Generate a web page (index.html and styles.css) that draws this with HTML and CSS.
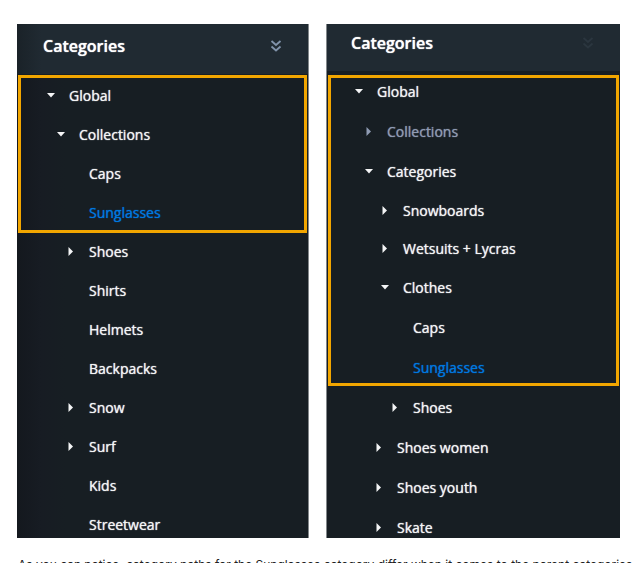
FILE: index.html
```html
<!DOCTYPE html>
<html lang="en">
<head>
<meta charset="utf-8">
<meta name="viewport" content="width=device-width, initial-scale=1">
<title>Categories</title>
<link rel="stylesheet" href="styles.css">
</head>
<body>
<svg class="defs" aria-hidden="true">
  <symbol id="down" viewBox="0 0 12 12"><path d="M2 3h8l-4 4.500z" fill="currentColor"/></symbol>
  <symbol id="right" viewBox="0 0 12 12"><path d="M3.500 1v9l4.500-4.500z" fill="currentColor"/></symbol>
  <symbol id="chevrons" viewBox="0 0 12 12"><path d="M1.500 1l4.500 4L10.500 1M1.500 6.500l4.500 4L10.500 6.500" fill="none" stroke="currentColor" stroke-width="1.800"/></symbol>
</svg>
<main class="panels">
  <section class="panel panel-left">
    <header class="head">
      <h2>Categories</h2>
      <button class="collapse" aria-label="Collapse all"><svg><use href="#chevrons"/></svg></button>
    </header>
    <ul class="tree highlight">
      <li class="row l1"><button class="toggle" aria-label="Toggle Global"><svg><use href="#down"/></svg></button><a href="#">Global</a></li>
      <li class="row l2"><button class="toggle" aria-label="Toggle Collections"><svg><use href="#down"/></svg></button><a href="#">Collections</a></li>
      <li class="row l3"><span class="toggle"></span><a href="#">Caps</a></li>
      <li class="row l3"><span class="toggle"></span><a class="active" href="#">Sunglasses</a></li>
    </ul>
    <ul class="tree">
      <li class="row l3"><button class="toggle" aria-label="Toggle Shoes"><svg><use href="#right"/></svg></button><a href="#">Shoes</a></li>
      <li class="row l3"><span class="toggle"></span><a href="#">Shirts</a></li>
      <li class="row l3"><span class="toggle"></span><a href="#">Helmets</a></li>
      <li class="row l3"><span class="toggle"></span><a href="#">Backpacks</a></li>
      <li class="row l3"><button class="toggle" aria-label="Toggle Snow"><svg><use href="#right"/></svg></button><a href="#">Snow</a></li>
      <li class="row l3"><button class="toggle" aria-label="Toggle Surf"><svg><use href="#right"/></svg></button><a href="#">Surf</a></li>
      <li class="row l3"><span class="toggle"></span><a href="#">Kids</a></li>
      <li class="row l3 cut"><span class="toggle"></span><a href="#">Streetwear</a></li>
    </ul>
  </section>
  <section class="panel panel-right">
    <header class="head">
      <h2>Categories</h2>
      <button class="collapse" aria-label="Collapse all"><svg><use href="#chevrons"/></svg></button>
    </header>
    <ul class="tree highlight">
      <li class="row l1"><button class="toggle" aria-label="Toggle Global"><svg><use href="#down"/></svg></button><a href="#">Global</a></li>
      <li class="row l2 muted"><button class="toggle" aria-label="Toggle Collections"><svg><use href="#right"/></svg></button><a href="#">Collections</a></li>
      <li class="row l2"><button class="toggle" aria-label="Toggle Categories"><svg><use href="#down"/></svg></button><a href="#">Categories</a></li>
      <li class="row l4 tight"><button class="toggle" aria-label="Toggle Snowboards"><svg><use href="#right"/></svg></button><a href="#">Snowboards</a></li>
      <li class="row l4 tight"><button class="toggle" aria-label="Toggle Wetsuits + Lycras"><svg><use href="#right"/></svg></button><a href="#">Wetsuits + Lycras</a></li>
      <li class="row l4"><button class="toggle" aria-label="Toggle Clothes"><svg><use href="#down"/></svg></button><a href="#">Clothes</a></li>
      <li class="row l5"><span class="toggle"></span><a href="#">Caps</a></li>
      <li class="row l5"><span class="toggle"></span><a class="active" href="#">Sunglasses</a></li>
    </ul>
    <ul class="tree">
      <li class="row l5"><button class="toggle" aria-label="Toggle Shoes"><svg><use href="#right"/></svg></button><a href="#">Shoes</a></li>
      <li class="row l3"><button class="toggle" aria-label="Toggle Shoes women"><svg><use href="#right"/></svg></button><a href="#">Shoes women</a></li>
      <li class="row l3"><button class="toggle" aria-label="Toggle Shoes youth"><svg><use href="#right"/></svg></button><a href="#">Shoes youth</a></li>
      <li class="row l3 cut"><button class="toggle" aria-label="Toggle Skate"><svg><use href="#right"/></svg></button><a href="#">Skate</a></li>
    </ul>
  </section>
</main>
<p class="note">As you can notice, category paths for the Sunglasses category differ when it comes to the parent categories.</p>
</body>
</html>
```
FILE: styles.css
```css
* { box-sizing: border-box; }

body {
  margin: 0;
  height: 100vh;
  overflow: hidden;
  background: #fff;
  font-family: "Open Sans", sans-serif;
}

.defs { display: none; }

.panels {
  display: grid;
  grid-template-columns: 292fr 294fr;
  gap: 17px;
  padding: 24px 18px 0 17px;
}

.panel {
  --row: 40px;
  background: #171e23;
  color: #f4f5f6;
  text-shadow: 0 0 1px currentColor;
}

.panel-left {
  --row: 39px;
  border-right: 1px solid #82878a;
  background: linear-gradient(90deg, #14181e, #171c23 24px, #171e23 48px);
}

.panel-right { border-left: 1px solid #82878a; }

.head {
  display: flex;
  align-items: center;
  justify-content: space-between;
  height: 48px;
  padding: 0 26px 10px 24px;
  background: #202a32;
  border-bottom: 1px solid #171e23;
}

.panel-left .head {
  height: 52px;
  padding: 0 26px 6px;
  background: linear-gradient(90deg, #1a2228, #202a32 24px);
  border-bottom: 2px solid #171e23;
}

h2 {
  margin: 0;
  font-size: 16px;
  line-height: 20px;
  font-weight: 600;
  color: #fff;
}

button {
  border: 0;
  padding: 0;
  background: none;
  color: inherit;
}

svg { display: block; width: 12px; height: 12px; }

.collapse { color: #8193ab; }
.panel-right .collapse { color: #2b363f; }

.tree {
  position: relative;
  margin: 0;
  padding: 0;
  list-style: none;
}

/* Frame drawn over the rows so that it takes no space in the list */
.highlight::after {
  content: "";
  position: absolute;
  inset: -1px 1px;
  border: 3px solid #f2a600;
  pointer-events: none;
}

.panel-right .highlight::after { inset: 3px 1px 2px; }

.row {
  display: flex;
  gap: 12px;
  height: var(--row);
  line-height: var(--row);
  font-size: 14px;
  font-weight: 500;
}

.row a {
  color: inherit;
  text-decoration: none;
  text-shadow: 0 0 1px currentColor;
}
.row a.active { color: #0078e0; }

.toggle {
  display: flex;
  align-items: center;
  width: 12px;
  height: var(--row);
}

.l1 { padding-left: 28px; }
.l2 { padding-left: 38px; }
.l3 { padding-left: 48px; }
.panel-right .l1 { padding-left: 26px; }
.panel-right .l2 { padding-left: 36px; }
.panel-right .l3 { padding-left: 46px; }
.l4 { padding-left: 52px; }
.l5 { padding-left: 62px; }

.tight { --row: 38px; }
.muted { color: #8f9bb3; }

.cut { height: 33px; overflow: hidden; }
.panel-right .cut { height: 30px; }

.note {
  margin: 18px 0 0 18px;
  font-family: Inter, sans-serif;
  font-size: 12px;
  line-height: 18px;
  white-space: nowrap;
  color: #222;
}
```
